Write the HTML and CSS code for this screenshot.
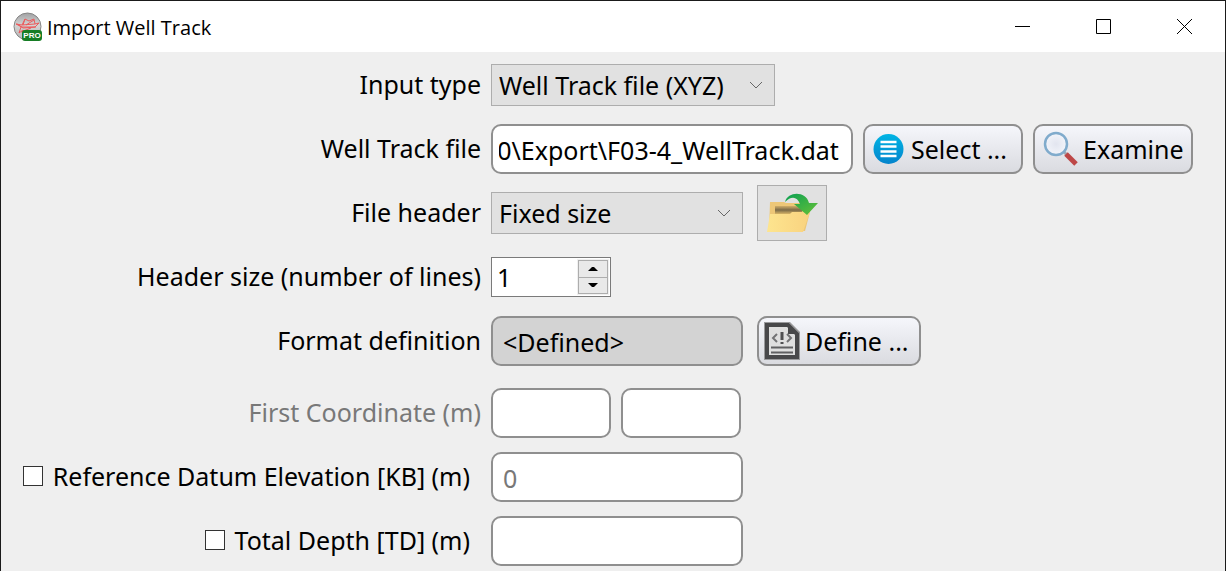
FILE: index.html
```html
<!DOCTYPE html>
<html lang="en">
<head>
<meta charset="utf-8">
<title>Import Well Track</title>
<link rel="stylesheet" href="styles.css">
</head>
<body>
<div class="window">
  <header class="titlebar">
    <svg class="app-icon" width="30" height="30" viewBox="0 0 30 30" aria-hidden="true">
      <defs>
        <linearGradient id="ball" x1="0" y1="0" x2="0" y2="1"><stop offset="0" stop-color="#a2a2a4"/><stop offset=".45" stop-color="#d4d4d4"/><stop offset="1" stop-color="#b4b4b4"/></linearGradient>
      </defs>
      <circle cx="14.500" cy="14.500" r="13.500" fill="url(#ball)" stroke="#858585"/>
      <path d="M3 12l6 1 3-6 4 2 5-2 1 5 4-1-4 4H9zM9 13l13-1M8 15l-2 6 4-3 4 6M12 7l-2 6M21 8l-8 5M4 12l6 4 13-1M8 20l10-4" fill="none" stroke="#ec5a5c"/>
      <rect x="9" y="18" width="20" height="11" rx="3" fill="#167d25"/>
      <text class="app-badge" x="19" y="26" text-anchor="middle">PRO</text>
    </svg>
    <h1 class="title">Import Well Track</h1>
    <div class="window-buttons">
      <button class="window-button" type="button" aria-label="Minimize"><svg width="15" height="15" viewBox="0 0 15 15"><path d="M0 7.500h15"/></svg></button>
      <button class="window-button" type="button" aria-label="Maximize"><svg width="15" height="15" viewBox="0 0 15 15"><path d="M.5.5h14v14H.5z"/></svg></button>
      <button class="window-button" type="button" aria-label="Close"><svg width="15" height="15" viewBox="0 0 15 15"><path d="M0 0l15 15M15 0L0 15"/></svg></button>
    </div>
  </header>

  <form class="form">
    <div class="row">
      <label class="label" for="input-type">Input type</label>
      <div class="fields">
        <select class="combo combo-wide" id="input-type"><option>Well Track file (XYZ)</option></select>
      </div>
    </div>
    <div class="row">
      <label class="label" for="track-file">Well Track file</label>
      <div class="fields">
        <input class="text path" id="track-file" type="text" value="F3_Demo_2020\Export\F03-4_WellTrack.dat">
        <button class="push" type="button">
          <svg width="32" height="32" viewBox="0 0 32 32" aria-hidden="true">
            <defs><linearGradient id="disc" x1="0" y1="0" x2="0" y2="1"><stop offset="0" stop-color="#00b4e4"/><stop offset="1" stop-color="#0584cc"/></linearGradient></defs>
            <circle cx="15.500" cy="16" r="15" fill="url(#disc)"/>
            <path d="M7.500 9h16M7.500 13.500h16M7.500 18.500h16M7.500 23h16" stroke="#fff" stroke-width="2.500"/>
          </svg>
          Select ...
        </button>
        <button class="push push-examine" type="button">
          <svg width="36" height="36" viewBox="0 0 36 36" aria-hidden="true">
            <defs><radialGradient id="glass"><stop offset="0" stop-color="#e2e5ef"/><stop offset="1" stop-color="#f2f4fa"/></radialGradient></defs>
            <path d="M21 21l4 4" stroke="#a3a9b2" stroke-width="3"/>
            <path d="M23 23l10 10" stroke="#bd4747" stroke-width="5"/>
            <circle cx="13" cy="13" r="11" fill="url(#glass)" stroke="#80abcc" stroke-width="2.500"/>
          </svg>
          Examine
        </button>
      </div>
    </div>
    <div class="row">
      <label class="label" for="file-header">File header</label>
      <div class="fields fields-spaced">
        <select class="combo combo-medium" id="file-header"><option>Fixed size</option></select>
        <button class="tool" type="button" aria-label="Open file header">
          <svg width="52" height="42" viewBox="0 0 52 42" aria-hidden="true">
            <defs>
              <linearGradient id="folder" x1="0" y1="0" x2="1" y2="0"><stop offset="0" stop-color="#fde58f"/><stop offset="1" stop-color="#f9d27f"/></linearGradient>
              <linearGradient id="inside" x1="0" y1="0" x2="0" y2="1"><stop offset="0" stop-color="#d0ad68"/><stop offset=".5" stop-color="#7a6a47"/><stop offset="1" stop-color="#d8b567"/></linearGradient>
              <linearGradient id="arrow" x1="0" y1="0" x2="1" y2="1"><stop offset="0" stop-color="#0ba052"/><stop offset="1" stop-color="#67c137"/></linearGradient>
            </defs>
            <path d="M4 10h14l2 1h24v9l-5 19H3z" fill="#edc777"/>
            <path d="M9 14h27v8H9z" fill="url(#inside)"/>
            <path d="M4 22h20l2-2h18l-7 20H1z" fill="url(#folder)"/>
            <path d="M19 10C22-1 40-1 43 11h9L41 23 28 12h6C31 4 25 4 19 10z" fill="url(#arrow)"/>
          </svg>
        </button>
      </div>
    </div>
    <div class="row">
      <label class="label" for="header-size">Header size (number of lines)</label>
      <div class="fields">
        <div class="spin">
          <input class="spin-input" id="header-size" type="text" inputmode="numeric" value="1">
          <div class="spin-buttons">
            <button class="spin-button" type="button" aria-label="Increase"><svg width="10" height="6" viewBox="0 0 10 6"><path d="M0 5l4-4h2l4 4z"/></svg></button>
            <button class="spin-button" type="button" aria-label="Decrease"><svg width="10" height="6" viewBox="0 0 10 6"><path d="M0 1l4 4h2l4-4z"/></svg></button>
          </div>
        </div>
      </div>
    </div>
    <div class="row">
      <label class="label" for="format">Format definition</label>
      <div class="fields fields-spaced">
        <input class="text medium defined" id="format" type="text" value="&lt;Defined&gt;" readonly>
        <button class="push push-define" type="button">
          <svg width="36" height="38" viewBox="0 0 36 38" aria-hidden="true">
            <path d="M0 0h26l10 10v28H0z" fill="#9a9a9c"/>
            <path d="M3 3h21l9 9v23H3z" fill="#dfdfdf" stroke="#48484a" stroke-width="4"/>
            <path d="M24 2v10h10z" fill="#48484a"/>
            <path d="M13 12l-4 4 4 4M23 12l4 4-4 4" fill="none" stroke="#737375" stroke-width="2"/>
            <path d="M18 10v8M18 20v2" stroke="#505052" stroke-width="3"/>
            <path d="M7 25.500h22M7 30.500h22" stroke="#606062" stroke-width="2"/>
          </svg>
          Define ...
        </button>
      </div>
    </div>
    <div class="row row-group">
      <label class="label label-disabled" for="coord-x">First Coordinate (m)</label>
      <div class="fields">
        <input class="text small" id="coord-x" type="text" disabled>
        <input class="text small" type="text" aria-label="First Coordinate Y (m)" disabled>
      </div>
    </div>
    <div class="row">
      <label class="label label-check"><input class="check" type="checkbox">Reference Datum Elevation [KB] (m)</label>
      <div class="fields">
        <input class="text medium" type="text" aria-label="Reference Datum Elevation value" value="0" disabled>
      </div>
    </div>
    <div class="row">
      <label class="label label-check"><input class="check" type="checkbox">Total Depth [TD] (m)</label>
      <div class="fields">
        <input class="text medium" type="text" aria-label="Total Depth value" disabled>
      </div>
    </div>
  </form>
</div>
<script src="script.js"></script>
</body>
</html>
```
FILE: styles.css
```css
* {
  box-sizing: border-box;
}

body {
  margin: 0;
  background: #efefef;
  color: #000;
  font-family: "Noto Sans", "Open Sans", sans-serif;
  font-size: 25px;
}

button,
input,
select {
  margin: 0;
  color: inherit;
  font: inherit;
}

svg {
  display: block;
  flex: none;
}

.window {
  min-height: 100vh;
  border: 1px solid #1a1a1a;
  border-bottom: 0;
}

.titlebar {
  display: flex;
  align-items: center;
  height: 51px;
  padding-left: 12px;
  background: #fff;
}

.app-badge {
  fill: #fff;
  font: bold 8px "Liberation Sans", sans-serif;
}

.title {
  margin: 0 auto 0 4px;
  padding-top: 2px;
  font-family: "Open Sans", sans-serif;
  font-size: 20px;
  font-weight: 400;
}

.window-buttons {
  display: flex;
  align-self: stretch;
}

.window-button {
  display: flex;
  align-items: center;
  justify-content: center;
  width: 81px;
  padding: 0;
  border: 0;
  background: none;
}

.window-button path {
  fill: none;
  stroke: #000;
}

.form {
  display: flex;
  flex-direction: column;
  gap: 14px;
  padding: 8px 0 5px;
}

.row {
  display: grid;
  grid-template-columns: 480px 1fr;
  grid-template-rows: 50px;
  column-gap: 10px;
  align-items: center;
}

.row-group {
  margin-top: 8px;
}

.label {
  padding-bottom: 2px;
  text-align: right;
  white-space: nowrap;
}

.label-disabled {
  color: #787878;
}

.label-check {
  display: flex;
  align-items: center;
  justify-content: flex-end;
  gap: 10px;
  padding-right: 11px;
}

.check {
  appearance: none;
  width: 20px;
  height: 20px;
  border: 1px solid #333;
  background: #fff;
}

.check:checked {
  box-shadow: inset 0 0 0 4px #fff;
  background: #333;
}

.fields {
  display: flex;
  align-items: center;
  gap: 10px;
}

.fields-spaced {
  gap: 14px;
}

.combo {
  appearance: none;
  height: 42px;
  padding: 0 7px;
  border: 1px solid #adadad;
  border-radius: 0;
  background-color: #e1e1e1;
  background-image:
    linear-gradient(45deg, #0000 46%, #666 46% 58%, #0000 58%),
    linear-gradient(-45deg, #0000 46%, #666 46% 58%, #0000 58%);
  background-position: right 18px center, right 12px center;
  background-repeat: no-repeat;
  background-size: 6px 6px;
}

.combo-wide {
  width: 284px;
}

.combo-medium {
  width: 252px;
}

.text {
  height: 50px;
  padding: 2px 10px 0;
  border: 2px solid #8f8f8f;
  border-radius: 10px;
  background: #fff;
}

.text:disabled {
  color: #787878;
}

.path {
  width: 362px;
  padding: 2px 12px 0 6px;
}

.medium {
  width: 252px;
}

.small {
  width: 120px;
}

.defined {
  background: #d3d3d3;
}

.push {
  display: flex;
  align-items: center;
  gap: 6px;
  height: 50px;
  width: 160px;
  padding: 0 8px;
  border: 2px solid #8f8f8f;
  border-radius: 10px;
  background: linear-gradient(#f5f6fb, #dadbe0);
  white-space: nowrap;
}

.push-examine {
  gap: 4px;
}

.push-define {
  gap: 5px;
  width: 164px;
  padding: 0 5px;
}

.tool {
  display: flex;
  align-items: center;
  justify-content: center;
  width: 70px;
  height: 56px;
  padding: 0;
  border: 1px solid #adadad;
  background: #e1e1e1;
}

.spin {
  display: flex;
  width: 120px;
  height: 40px;
  padding: 1px;
  border: 1px solid #7a7a7a;
  background: #fff;
}

.spin-input {
  flex: 1;
  min-width: 0;
  padding: 0 4px;
  border: 0;
  background: none;
}

.spin-buttons {
  display: flex;
  flex-direction: column;
  width: 32px;
  padding: 1px;
  background: #f0f0f0;
}

.spin-button {
  display: flex;
  flex: 1;
  align-items: center;
  justify-content: center;
  padding: 0;
  border: 1px solid #adadad;
  background: #e9e9e9;
}

.spin-button + .spin-button {
  border-top: 0;
}
```
FILE: script.js
```js
// Long paths show their file name, not their drive.
const path = document.getElementById("track-file");
path.scrollLeft = path.scrollWidth;
```
